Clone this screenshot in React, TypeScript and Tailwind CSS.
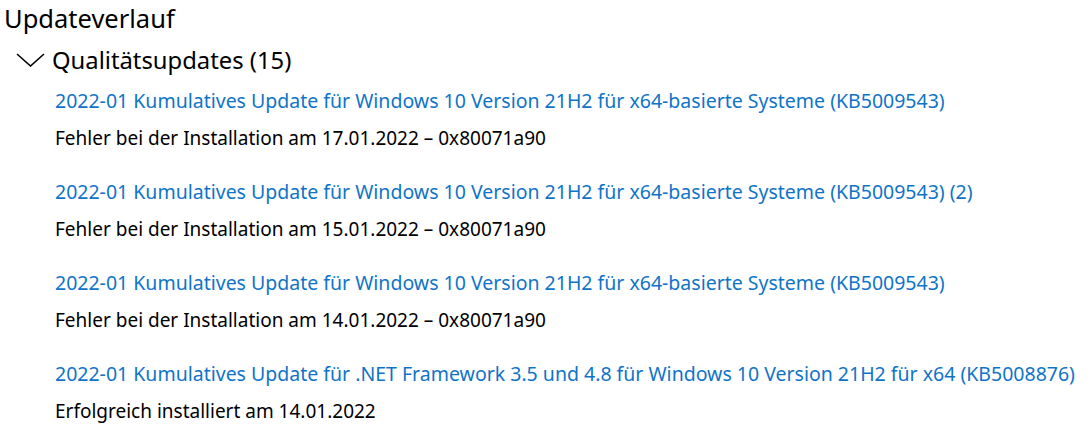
const UPDATES = [
  {
    title:
      "2022-01 Kumulatives Update für Windows 10 Version 21H2 für x64-basierte Systeme (KB5009543)",
    status: "Fehler bei der Installation am 17.01.2022 – 0x80071a90",
  },
  {
    title:
      "2022-01 Kumulatives Update für Windows 10 Version 21H2 für x64-basierte Systeme (KB5009543) (2)",
    status: "Fehler bei der Installation am 15.01.2022 – 0x80071a90",
  },
  {
    title:
      "2022-01 Kumulatives Update für Windows 10 Version 21H2 für x64-basierte Systeme (KB5009543)",
    status: "Fehler bei der Installation am 14.01.2022 – 0x80071a90",
  },
  {
    title:
      "2022-01 Kumulatives Update für .NET Framework 3.5 und 4.8 für Windows 10 Version 21H2 für x64 (KB5008876)",
    status: "Erfolgreich installiert am 14.01.2022",
  },
];

export default function App() {
  return (
    <div className="h-[432px] w-[1092px] overflow-hidden bg-white font-['Noto_Sans',sans-serif] text-black">
      <h1 className="pl-[4px] text-[25.5px] leading-[36px]">Updateverlauf</h1>
      <div className="mt-[6px] flex items-center pl-[16px]">
        <svg width="29" height="14" viewBox="0 0 29 14" fill="none" className="mr-[7px]">
          <path d="M1 1 L14.5 13 L28 1" stroke="#000" strokeWidth="1.6" />
        </svg>
        <span className="text-[23.8px] leading-[36px]">Qualitätsupdates (15)</span>
      </div>
      <div className="mt-[4px] pl-[55px]">
        {UPDATES.map((u, i) => (
          <div key={i} className="flex flex-col">
            <a className="cursor-pointer text-[19.5px] leading-[37px] text-[#0f74c8]">{u.title}</a>
            <p className="mt-[1px] text-[19px] leading-[37px]">{u.status}</p>
            <div className="h-[16px]" />
          </div>
        ))}
      </div>
    </div>
  );
}
